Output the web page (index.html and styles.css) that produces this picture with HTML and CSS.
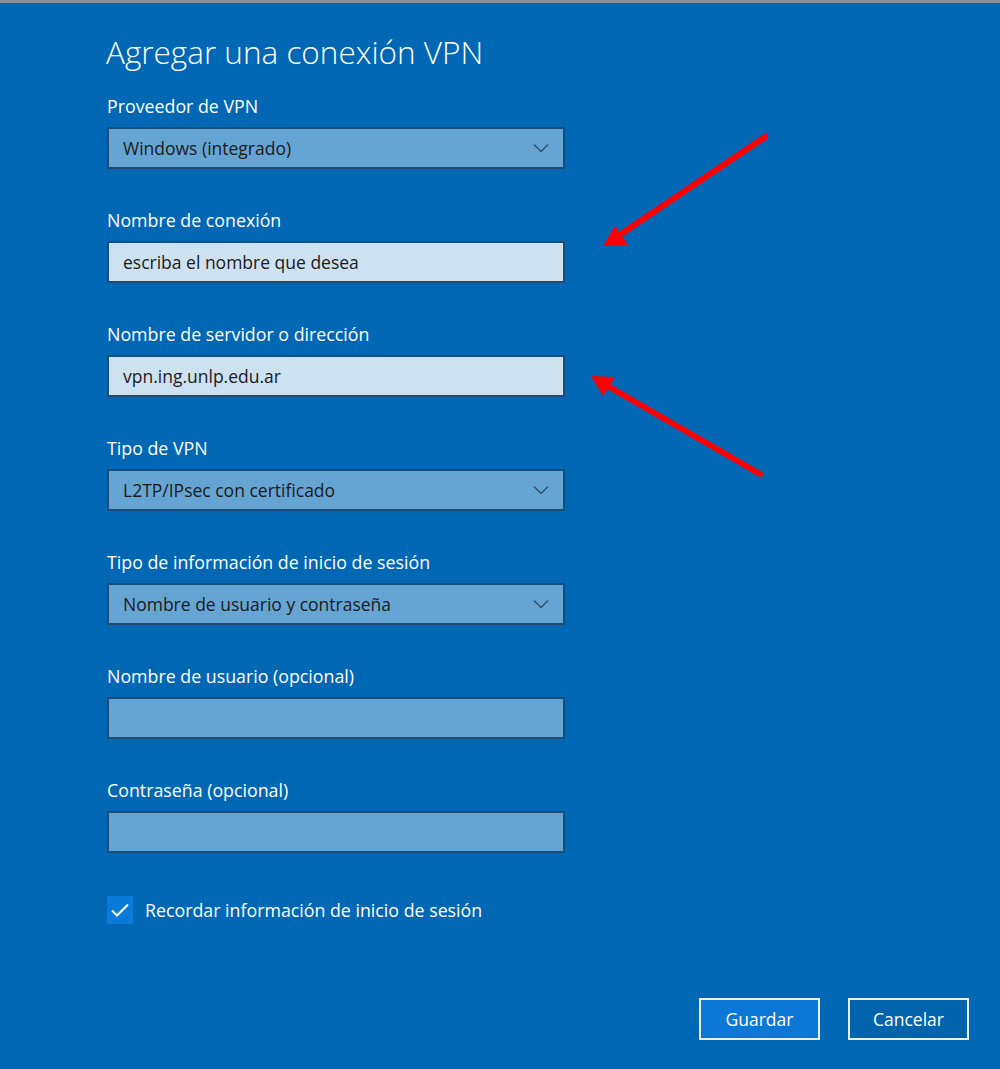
FILE: index.html
```html
<!DOCTYPE html>
<html lang="es">
<head>
<meta charset="utf-8">
<title>Agregar una conexión VPN</title>
<link rel="stylesheet" href="styles.css">
</head>
<body>
<div class="window">
  <div class="form">
    <h1 class="title">Agregar una conexión VPN</h1>

    <div class="group">
      <div class="label">Proveedor de VPN</div>
      <div class="field select"><span class="value">Windows (integrado)</span>
        <svg class="chev" width="16" height="10" viewBox="0 0 16 10"><path d="M1 1.5 L8 8.5 L15 1.5" fill="none" stroke="#2f4f6e" stroke-width="1.3"/></svg>
      </div>
    </div>

    <div class="group">
      <div class="label">Nombre de conexión</div>
      <div class="field input"><span class="value">escriba el nombre que desea</span></div>
    </div>

    <div class="group">
      <div class="label">Nombre de servidor o dirección</div>
      <div class="field input"><span class="value">vpn.ing.unlp.edu.ar</span></div>
    </div>

    <div class="group">
      <div class="label">Tipo de VPN</div>
      <div class="field select"><span class="value">L2TP/IPsec con certificado</span>
        <svg class="chev" width="16" height="10" viewBox="0 0 16 10"><path d="M1 1.5 L8 8.5 L15 1.5" fill="none" stroke="#2f4f6e" stroke-width="1.3"/></svg>
      </div>
    </div>

    <div class="group">
      <div class="label">Tipo de información de inicio de sesión</div>
      <div class="field select"><span class="value">Nombre de usuario y contraseña</span>
        <svg class="chev" width="16" height="10" viewBox="0 0 16 10"><path d="M1 1.5 L8 8.5 L15 1.5" fill="none" stroke="#2f4f6e" stroke-width="1.3"/></svg>
      </div>
    </div>

    <div class="group">
      <div class="label">Nombre de usuario (opcional)</div>
      <div class="field select"></div>
    </div>

    <div class="group">
      <div class="label">Contraseña (opcional)</div>
      <div class="field select"></div>
    </div>

    <div class="check-row">
      <div class="checkbox">
        <svg width="20" height="16" viewBox="0 0 20 16"><path d="M2 8.5 L7 13.5 L18 2.5" fill="none" stroke="#ffffff" stroke-width="2"/></svg>
      </div>
      <span class="check-label">Recordar información de inicio de sesión</span>
    </div>
  </div>

  <div class="buttons">
    <div class="btn primary">Guardar</div>
    <div class="btn">Cancelar</div>
  </div>

  <svg class="arrows" width="1000" height="1069" viewBox="0 0 1000 1069">
    <g stroke="#ff0000" stroke-width="6" stroke-linecap="round" fill="#ff0000">
      <line x1="765" y1="137" x2="618" y2="236"/>
      <line x1="760" y1="474" x2="606" y2="385"/>
    </g>
    <g fill="#ff0000">
      <polygon points="603,246 615,226 628,245"/>
      <polygon points="591,376 615,377 603,396"/>
    </g>
  </svg>
</div>
</body>
</html>
```
FILE: styles.css
```css
html, body {
  margin: 0;
  padding: 0;
}
body {
  width: 1000px;
  height: 1069px;
  overflow: hidden;
  background: #0067b4;
  font-family: "Open Sans", "Noto Sans", "Liberation Sans", sans-serif;
}
.window {
  position: relative;
  box-sizing: border-box;
  width: 1000px;
  height: 1069px;
  border-top: 3px solid #8c8f94;
  background: #0067b4;
  display: flex;
  flex-direction: column;
}
.form {
  padding-left: 107px;
  display: flex;
  flex-direction: column;
}
.title {
  margin: 29px 0 23px -1px;
  font-weight: 300;
  font-size: 31.5px;
  line-height: 40px;
  color: #ffffff;
}
.group {
  display: flex;
  flex-direction: column;
  margin-bottom: 40px;
}
.label {
  color: #ffffff;
  font-size: 17.8px;
  line-height: 22px;
  margin-bottom: 10px;
}
.field {
  box-sizing: border-box;
  width: 458px;
  height: 42px;
  border: 2px solid #1c4c78;
  display: flex;
  align-items: center;
  padding: 0 12px 0 14px;
  font-size: 17.5px;
  color: #1b1b1b;
}
.value {
  flex: 0 0 auto;
  white-space: nowrap;
}
.select {
  background: #66a4d3;
}
.input {
  background: #cde1f1;
}
.chev {
  margin-left: auto;
  margin-right: 2px;
}
.check-row {
  display: flex;
  align-items: center;
  gap: 12px;
  margin-top: 3px;
}
.checkbox {
  width: 26px;
  height: 28px;
  background: #0a7ad8;
  display: flex;
  align-items: center;
  justify-content: center;
}
.check-label {
  color: #ffffff;
  font-size: 17.8px;
}
.buttons {
  display: flex;
  gap: 28px;
  justify-content: flex-end;
  padding-right: 31px;
  margin-top: auto;
  margin-bottom: 29px;
}
.btn {
  box-sizing: border-box;
  width: 121px;
  height: 42px;
  border: 2px solid #e8f1fa;
  color: #ffffff;
  display: flex;
  align-items: center;
  justify-content: center;
  font-size: 17.5px;
  background: #0063ad;
}
.btn.primary {
  background: #0b78d8;
}
.arrows {
  position: absolute;
  left: 0;
  top: -3px;
  pointer-events: none;
}
```
